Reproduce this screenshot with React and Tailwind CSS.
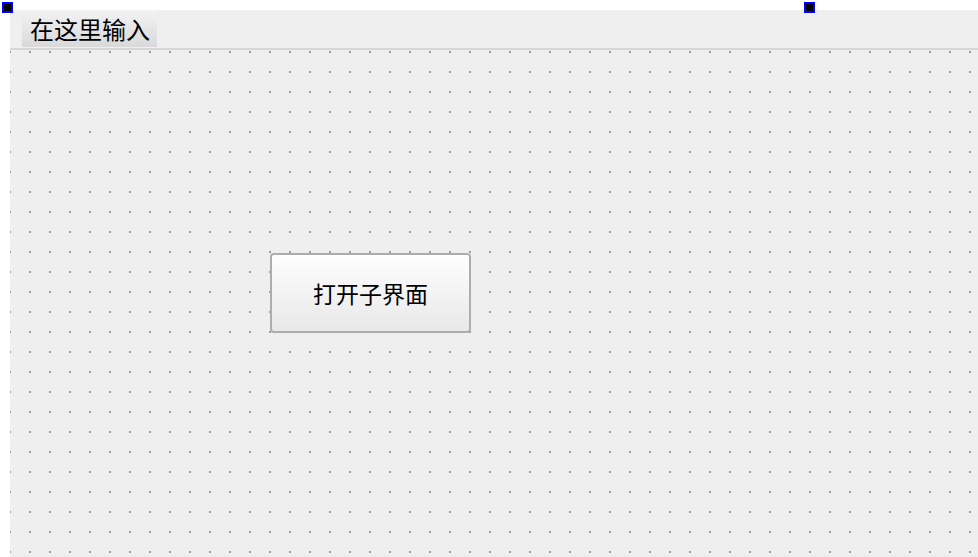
// Qt Designer style form preview
const cjk = { fontFamily: '"Noto Sans CJK SC", "Noto Sans", sans-serif' };

function Handle({ className }) {
  return (
    <div
      className={`absolute top-[2px] h-[11px] w-[11px] border-2 border-[#0000ff] bg-black ${className}`}
    />
  );
}

export default function App() {
  return (
    <div className="relative h-[557px] w-[978px] overflow-hidden bg-white pl-[10px] pt-[10px]" style={cjk}>
      <div className="flex h-[547px] flex-col bg-[#efefef]">
        {/* menu bar */}
        <div className="flex h-[38px] items-start pl-[12px]">
          <div className="flex h-[37px] items-center bg-gradient-to-b from-[#f3f3f3] to-[#d9d9d9] pl-[8px] pr-[7px] text-[24px] leading-none text-black">
            在这里输入
          </div>
        </div>
        <div className="h-[2px] bg-[#d6d6d6]" />

        {/* canvas with grid dots */}
        <div className="flex-1 bg-[image:radial-gradient(circle_at_1px_1px,#9c9c9c_1px,transparent_1.2px)] bg-[length:20px_20px] bg-[position:-1px_1px]">
          <button className="ml-[260px] mt-[203px] flex h-[80px] w-[201px] items-center justify-center rounded-[4px] border-2 border-[#adadad] bg-gradient-to-b from-[#fefefe] to-[#e8e8e8] pt-[1px] text-[23px] text-black">
            打开子界面
          </button>
        </div>
      </div>

      <Handle className="left-[2px]" />
      <Handle className="left-[804px]" />
    </div>
  );
}
